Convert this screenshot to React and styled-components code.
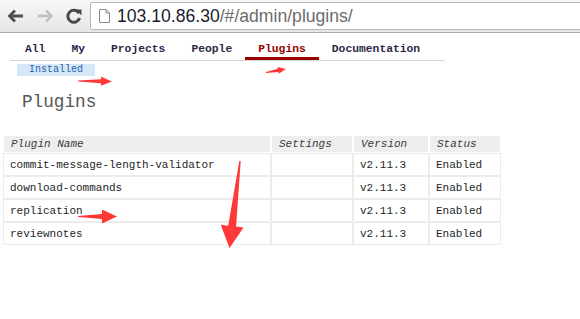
import React from "react";
import styled, { createGlobalStyle } from "styled-components";

const Global = createGlobalStyle`
  html, body { margin: 0; padding: 0; background: #fff; }
  body { font-family: "Liberation Mono", monospace; }
  #root { position: relative; min-height: 319px; overflow: hidden; }
`;

const Toolbar = styled.div`
  height: 33px;
  display: flex;
  align-items: center;
  background: linear-gradient(#f7f7f7, #e6e6e6);
  border-bottom: 1px solid #a9a9a9;
  box-sizing: border-box;
`;

const NavButton = styled.div`
  width: 29px;
  height: 24px;
  display: flex;
  align-items: center;
  justify-content: center;
  margin-left: ${(p) => p.$ml || 0}px;
`;

const AddressBox = styled.div`
  flex: 1;
  height: 28px;
  margin-left: 2px;
  margin-right: -4px;
  background: #fff;
  border: 1px solid #b8b8b8;
  border-radius: 2px;
  display: flex;
  align-items: center;
  padding-left: 8px;
  box-sizing: border-box;
  align-self: flex-start;
  margin-top: 2px;
`;

const Url = styled.span`
  font-family: "Liberation Sans", Arial, sans-serif;
  font-size: 17.6px;
  color: #6c6c6c;
  margin-left: 7px;
`;

const Host = styled.span`
  color: #1b1b2e;
`;

const Page = styled.div`
  padding: 0 0 0 10px;
`;

const Nav = styled.div`
  display: inline-flex;
  border-bottom: 1px solid #d6d6d6;
  padding: 0 12px 0 2px;
`;

const Tab = styled.div`
  font-family: "Liberation Mono", monospace;
  font-weight: bold;
  font-size: 11.33px;
  padding: 0 13px;
  height: 27px;
  line-height: 33px;
  box-sizing: border-box;
  color: ${(p) => (p.$active ? "#990000" : "#2a2a48")};
  border-bottom: 3px solid ${(p) => (p.$active ? "#990000" : "transparent")};
`;

const SubNav = styled.div`
  display: flex;
  margin: 3px 0 0 7px;
`;

const SubTab = styled.div`
  font-family: "Liberation Mono", monospace;
  font-size: 10px;
  color: #1f5fa8;
  background: #d6e8f7;
  height: 12px;
  line-height: 12px;
  padding: 0 12px;
`;

const Heading = styled.h1`
  font-family: "Liberation Mono", monospace;
  font-weight: normal;
  font-size: 17.7px;
  line-height: 22px;
  color: #555;
  margin: 15px 0 0 12px;
`;

const Table = styled.table`
  border-collapse: separate;
  border-spacing: 0;
  margin: 22px 0 0 -7px;
  width: 498px;
  font-family: "Liberation Mono", monospace;
`;

const Th = styled.th`
  background: #eeeeee;
  border: 1px solid #fff;
  font-style: italic;
  font-weight: normal;
  font-size: 11px;
  color: #3a3a3a;
  text-align: left;
  height: 18px;
  padding: 0 0 0 7px;
  box-sizing: border-box;
  width: ${(p) => p.$w}px;
`;

const Td = styled.td`
  border: 1px solid #ececec;
  font-size: 11px;
  color: #1e1e1e;
  height: 23px;
  padding: 0 0 0 6px;
  box-sizing: border-box;
  white-space: nowrap;
`;

const Overlay = styled.svg`
  position: absolute;
  left: 0;
  top: 0;
  pointer-events: none;
`;

function arrowPoints(tail, tip, headLen, headW, shaftTail, shaftHead) {
  const [x1, y1] = tail;
  const [x2, y2] = tip;
  const dx = x2 - x1, dy = y2 - y1;
  const L = Math.hypot(dx, dy);
  const ux = dx / L, uy = dy / L;
  const nx = -uy, ny = ux;
  const bx = x2 - ux * headLen, by = y2 - uy * headLen;
  const p = (x, y) => `${x.toFixed(1)},${y.toFixed(1)}`;
  return [
    p(x1 + nx * shaftTail / 2, y1 + ny * shaftTail / 2),
    p(bx + nx * shaftHead / 2, by + ny * shaftHead / 2),
    p(bx + nx * headW / 2, by + ny * headW / 2),
    p(x2, y2),
    p(bx - nx * headW / 2, by - ny * headW / 2),
    p(bx - nx * shaftHead / 2, by - ny * shaftHead / 2),
    p(x1 - nx * shaftTail / 2, y1 - ny * shaftTail / 2),
  ].join(" ");
}

const arrows = [
  { tail: [78, 81], tip: [112, 81.5], hl: 11, hw: 9, st: 1, sh: 4 },
  { tail: [266, 72.5], tip: [286, 69], hl: 8, hw: 7, st: 1, sh: 3.5 },
  { tail: [78, 216.5], tip: [117, 216.5], hl: 15, hw: 14, st: 1, sh: 5 },
  { tail: [240, 161], tip: [229.5, 248], hl: 22, hw: 23, st: 1.5, sh: 8 },
];

const rows = [
  "commit-message-length-validator",
  "download-commands",
  "replication",
  "reviewnotes",
];

export default function App() {
  return (
    <>
      <Global />
      <Toolbar>
        <NavButton $ml={1}>
          <svg width="18" height="16" viewBox="0 0 18 16">
            <path d="M8 2.5 L2.5 8 L8 13.5 M2.5 8 H16" fill="none" stroke="#505050" strokeWidth="2.8" strokeLinejoin="miter" />
          </svg>
        </NavButton>
        <NavButton>
          <svg width="18" height="16" viewBox="0 0 18 16">
            <path d="M10 2.5 L15.5 8 L10 13.5 M15.5 8 H2" fill="none" stroke="#bdbdbd" strokeWidth="2.4" />
          </svg>
        </NavButton>
        <NavButton>
          <svg width="18" height="18" viewBox="0 0 18 18">
            <path d="M14 6.2 A6 6 0 1 0 14.6 11" fill="none" stroke="#4a4a4a" strokeWidth="3" />
            <path d="M10.5 2.5 L16.5 2.5 L16.5 8.5 Z" fill="#4a4a4a" />
          </svg>
        </NavButton>
        <AddressBox>
          <svg width="11" height="14" viewBox="0 0 11 14">
            <path d="M0.5 0.5 H7 L10.5 4 V13.5 H0.5 Z M7 0.5 V4 H10.5" fill="#fff" stroke="#8a8a8a" strokeWidth="1" />
          </svg>
          <Url>
            <Host>103.10.86.30</Host>/#/admin/plugins/
          </Url>
        </AddressBox>
      </Toolbar>
      <Page>
        <Nav>
          <Tab>All</Tab>
          <Tab>My</Tab>
          <Tab>Projects</Tab>
          <Tab>People</Tab>
          <Tab $active>Plugins</Tab>
          <Tab>Documentation</Tab>
        </Nav>
        <SubNav>
          <SubTab>Installed</SubTab>
        </SubNav>
        <Heading>Plugins</Heading>
        <Table>
          <thead>
            <tr>
              <Th $w={268}>Plugin Name</Th>
              <Th $w={82}>Settings</Th>
              <Th $w={76}>Version</Th>
              <Th $w={72}>Status</Th>
            </tr>
          </thead>
          <tbody>
            {rows.map((r) => (
              <tr key={r}>
                <Td>{r}</Td>
                <Td></Td>
                <Td>v2.11.3</Td>
                <Td>Enabled</Td>
              </tr>
            ))}
          </tbody>
        </Table>
      </Page>
      <Overlay width="580" height="319" viewBox="0 0 580 319">
        {arrows.map((a, i) => (
          <polygon key={i} points={arrowPoints(a.tail, a.tip, a.hl, a.hw, a.st, a.sh)} fill="#ff3838" />
        ))}
      </Overlay>
    </>
  );
}
